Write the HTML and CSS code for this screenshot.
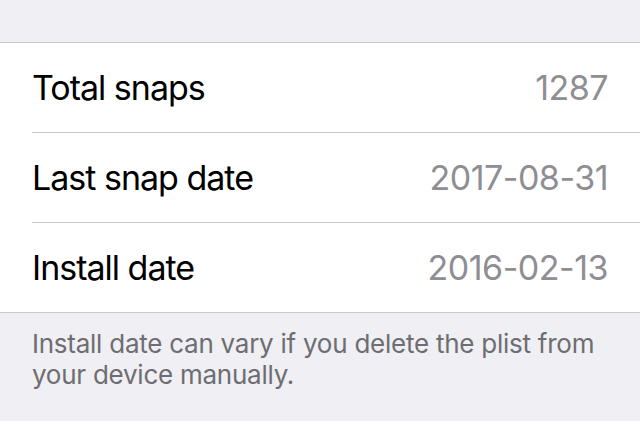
FILE: index.html
```html
<!DOCTYPE html>
<html>
<head>
<meta charset="utf-8">
<link rel="stylesheet" href="styles.css">
</head>
<body>
<div class="screen">
  <div class="top-space"></div>
  <div class="group">
    <div class="row">
      <span class="label">Total snaps</span>
      <span class="value">1287</span>
    </div>
    <div class="row">
      <span class="label">Last snap date</span>
      <span class="value">2017-08-31</span>
    </div>
    <div class="row">
      <span class="label">Install date</span>
      <span class="value">2016-02-13</span>
    </div>
  </div>
  <p class="footer">Install date can vary if you delete the plist from your device manually.</p>
</div>
</body>
</html>
```
FILE: styles.css
```css
html, body {
  margin: 0;
  padding: 0;
  background: #efeff4;
}
.screen {
  width: 640px;
  height: 421px;
  overflow: hidden;
  font-family: "Inter", "Liberation Sans", sans-serif;
}
.top-space {
  height: 42px;
}
.group {
  background: #ffffff;
  border-top: 1px solid #c8c7cc;
  border-bottom: 1px solid #c8c7cc;
}
.row {
  height: 89px;
  margin-left: 32px;
  padding-right: 32px;
  display: flex;
  align-items: center;
  justify-content: space-between;
  font-size: 34px;
  letter-spacing: -0.5px;
}
.row + .row {
  border-top: 1px solid #c8c7cc;
}
.label {
  color: #000000;
  letter-spacing: -1px;
}
.value {
  color: #8e8e93;
}
.footer {
  margin: 0;
  padding: 15px 32px 0 32px;
  font-size: 26px;
  line-height: 31px;
  color: #6d6d72;
  letter-spacing: -0.25px;
}
```
